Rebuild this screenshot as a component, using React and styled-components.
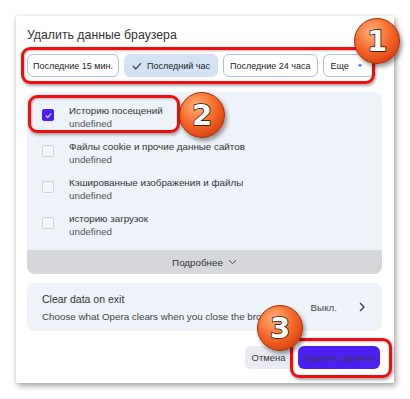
import React from 'react'
import styled, { createGlobalStyle } from 'styled-components'

const GlobalStyle = createGlobalStyle`
    body {
        margin: 0;
        background: #ffffff;
        font-family: "Liberation Sans", Arial, sans-serif;
    }
`

const Page = styled.div`
    width: 410px;
    height: 399px;
    padding: 16px 16px 0 16px;
    box-sizing: border-box;
    overflow: hidden;
`

const Dialog = styled.div`
    position: relative;
    width: 378px;
    height: 367px;
    box-sizing: border-box;
    background: #ffffff;
    box-shadow: 2px 3px 6px rgba(0, 0, 0, 0.35), -1px 0 3px rgba(0, 0, 0, 0.08);
    padding: 12px 12px 0 11px;
    display: flex;
    flex-direction: column;
`

const Title = styled.div`
    font-size: 12.3px;
    color: #333;
    height: 24px;
    line-height: 15px;
`

const ChipRow = styled.div`
    position: relative;
    display: flex;
    gap: 5px;
    margin-top: 2px;
    height: 23px;
`

const Chip = styled.div`
    display: flex;
    align-items: center;
    gap: 5px;
    height: 23px;
    box-sizing: border-box;
    padding: 0 ${p => p.$pad || 6}px;
    border-radius: 6px;
    font-size: 9px;
    color: #222;
    background: ${p => p.$active ? '#d4e2f6' : '#fff'};
    border: 1px solid ${p => p.$active ? '#d4e2f6' : '#a9c2ea'};
    white-space: nowrap;
`

const Panel = styled.div`
    margin-top: 15px;
    border-radius: 8px;
    overflow: hidden;
    background: #eef2f9;
    display: flex;
    flex-direction: column;
`

const List = styled.div`
    padding: 8px 0 6px 15px;
    display: flex;
    flex-direction: column;
`

const Item = styled.div`
    position: relative;
    display: flex;
    align-items: flex-start;
    height: 36px;
    padding-top: 4px;
    box-sizing: border-box;
`

const Box = styled.div`
    width: 12px;
    height: 12px;
    box-sizing: border-box;
    margin-top: 5px;
    border-radius: 2px;
    border: 1px solid ${p => p.$checked ? '#4a1ef0' : '#cfd3da'};
    background: ${p => p.$checked ? '#4a1ef0' : '#f4f6fa'};
    display: flex;
    align-items: center;
    justify-content: center;
`

const ItemText = styled.div`
    margin-left: 15px;
    display: flex;
    flex-direction: column;
`

const ItemTitle = styled.div`
    font-size: 9.8px;
    color: #333;
    line-height: 13px;
`

const ItemSub = styled.div`
    font-size: 9.8px;
    color: #555;
    line-height: 13px;
`

const More = styled.div`
    height: 24px;
    background: #d5d7db;
    display: flex;
    align-items: center;
    justify-content: center;
    gap: 5px;
    font-size: 9.8px;
    color: #333;
`

const ExitCard = styled.div`
    margin-top: 9px;
    height: 48px;
    border-radius: 8px;
    background: #eef2f9;
    display: flex;
    align-items: center;
    padding: 0 17px 0 15px;
    overflow: hidden;
`

const ExitText = styled.div`
    flex: 1;
    display: flex;
    flex-direction: column;
    gap: 3px;
    min-width: 0;
    overflow: hidden;
    margin-right: 10px;
`

const ExitTitle = styled.div`
    font-size: 10.5px;
    color: #333;
    line-height: 15px;
`

const ExitSub = styled.div`
    font-size: 9.8px;
    color: #444;
    white-space: nowrap;
    line-height: 13px;
`

const ExitValue = styled.div`
    font-size: 9.8px;
    color: #444;
    margin-right: 22px;
`

const Footer = styled.div`
    position: relative;
    display: flex;
    justify-content: flex-end;
    gap: 5px;
    margin-top: 15px;
    padding-right: 2px;
`

const Button = styled.div`
    height: 23px;
    padding: 0 ${p => p.$primary ? 5 : 7}px;
    border-radius: 6px;
    display: flex;
    align-items: center;
    font-size: 9.5px;
    background: ${p => p.$primary ? '#4e1ff4' : '#e8ecf2'};
    color: ${p => p.$primary ? '#3c3c50' : '#333'};
`

const Highlight = styled.div`
    position: absolute;
    box-sizing: border-box;
    border: 3.5px solid #f20d0d;
    border-radius: 9px;
    box-shadow: 1px 2px 3px rgba(0, 0, 0, 0.35), inset 1px 1px 2px rgba(0, 0, 0, 0.25);
    pointer-events: none;
`

const Badge = styled.div`
    position: absolute;
    width: 46px;
    height: 46px;
    border-radius: 50%;
    box-sizing: border-box;
    border: 1px solid #9a2a08;
    background: radial-gradient(circle at 38% 30%, #ffb27a 0%, #f66a2a 45%, #d9400e 80%, #b8320a 100%);
    box-shadow: 2px 3px 4px rgba(0, 0, 0, 0.4);
    display: flex;
    align-items: center;
    justify-content: center;
    font-family: "DejaVu Sans", sans-serif;
    font-weight: bold;
    font-size: 29px;
    color: #fff;
    -webkit-text-stroke: 1.5px #111;
    paint-order: stroke fill;
`

const Check = () => (
    <svg width="9" height="9" viewBox="0 0 10 10">
        <path d="M2 5.2 L4.2 7.3 L8 2.8" fill="none" stroke="#fff" strokeWidth="1.2" />
    </svg>
)

const items = [
    'Историю посещений',
    'Файлы cookie и прочие данные сайтов',
    'Кэшированные изображения и файлы',
    'историю загрузок',
]

export default function App() {
    return (
        <Page>
            <GlobalStyle />
            <Dialog>
                <Title>Удалить данные браузера</Title>
                <ChipRow>
                    <Chip $pad={5}>Последние 15 мин.</Chip>
                    <Chip $active $pad={7}>
                        <svg width="10" height="8" viewBox="0 0 10 8">
                            <path d="M1 4 L3.8 6.8 L9 1.2" fill="none" stroke="#333" strokeWidth="1.2" />
                        </svg>
                        Последний час
                    </Chip>
                    <Chip $pad={6}>Последние 24 часа</Chip>
                    <Chip $pad={7}>
                        Еще
                        <svg width="12" height="6" viewBox="0 0 12 6">
                            <path d="M3.5 1.5 L8.5 1.5 L6 4 Z" fill="#2f6fd8" />
                        </svg>
                    </Chip>
                    <Highlight style={{ left: -6, top: -7, width: 354, height: 37 }} />
                    <Badge style={{ left: 327, top: -36 }}>1</Badge>
                </ChipRow>
                <Panel>
                    <List>
                        {items.map((t, i) => (
                            <Item key={t}>
                                <Box $checked={i === 0}>{i === 0 && <Check />}</Box>
                                <ItemText>
                                    <ItemTitle>{t}</ItemTitle>
                                    <ItemSub>undefined</ItemSub>
                                </ItemText>
                                {i === 0 && <Highlight style={{ left: -14, top: -5, width: 152, height: 38 }} />}
                                {i === 0 && <Badge style={{ left: 137, top: -8 }}>2</Badge>}
                            </Item>
                        ))}
                    </List>
                    <More>
                        Подробнее
                        <svg width="9" height="6" viewBox="0 0 9 6">
                            <path d="M1 1.2 L4.5 4.6 L8 1.2" fill="none" stroke="#444" strokeWidth="1" />
                        </svg>
                    </More>
                </Panel>
                <ExitCard>
                    <ExitText>
                        <ExitTitle>Clear data on exit</ExitTitle>
                        <ExitSub>Choose what Opera clears when you close the browser</ExitSub>
                    </ExitText>
                    <ExitValue>Выкл.</ExitValue>
                    <svg width="6" height="10" viewBox="0 0 6 10">
                        <path d="M1 1 L5 5 L1 9" fill="none" stroke="#333" strokeWidth="1.3" />
                    </svg>
                </ExitCard>
                <Footer>
                    <Button>Отмена</Button>
                    <Button $primary>Удалить данные</Button>
                    <Highlight style={{ right: -10, top: -8, width: 102, height: 40 }} />
                    <Badge style={{ left: 230, top: -41 }}>3</Badge>
                </Footer>
            </Dialog>
        </Page>
    )
}
